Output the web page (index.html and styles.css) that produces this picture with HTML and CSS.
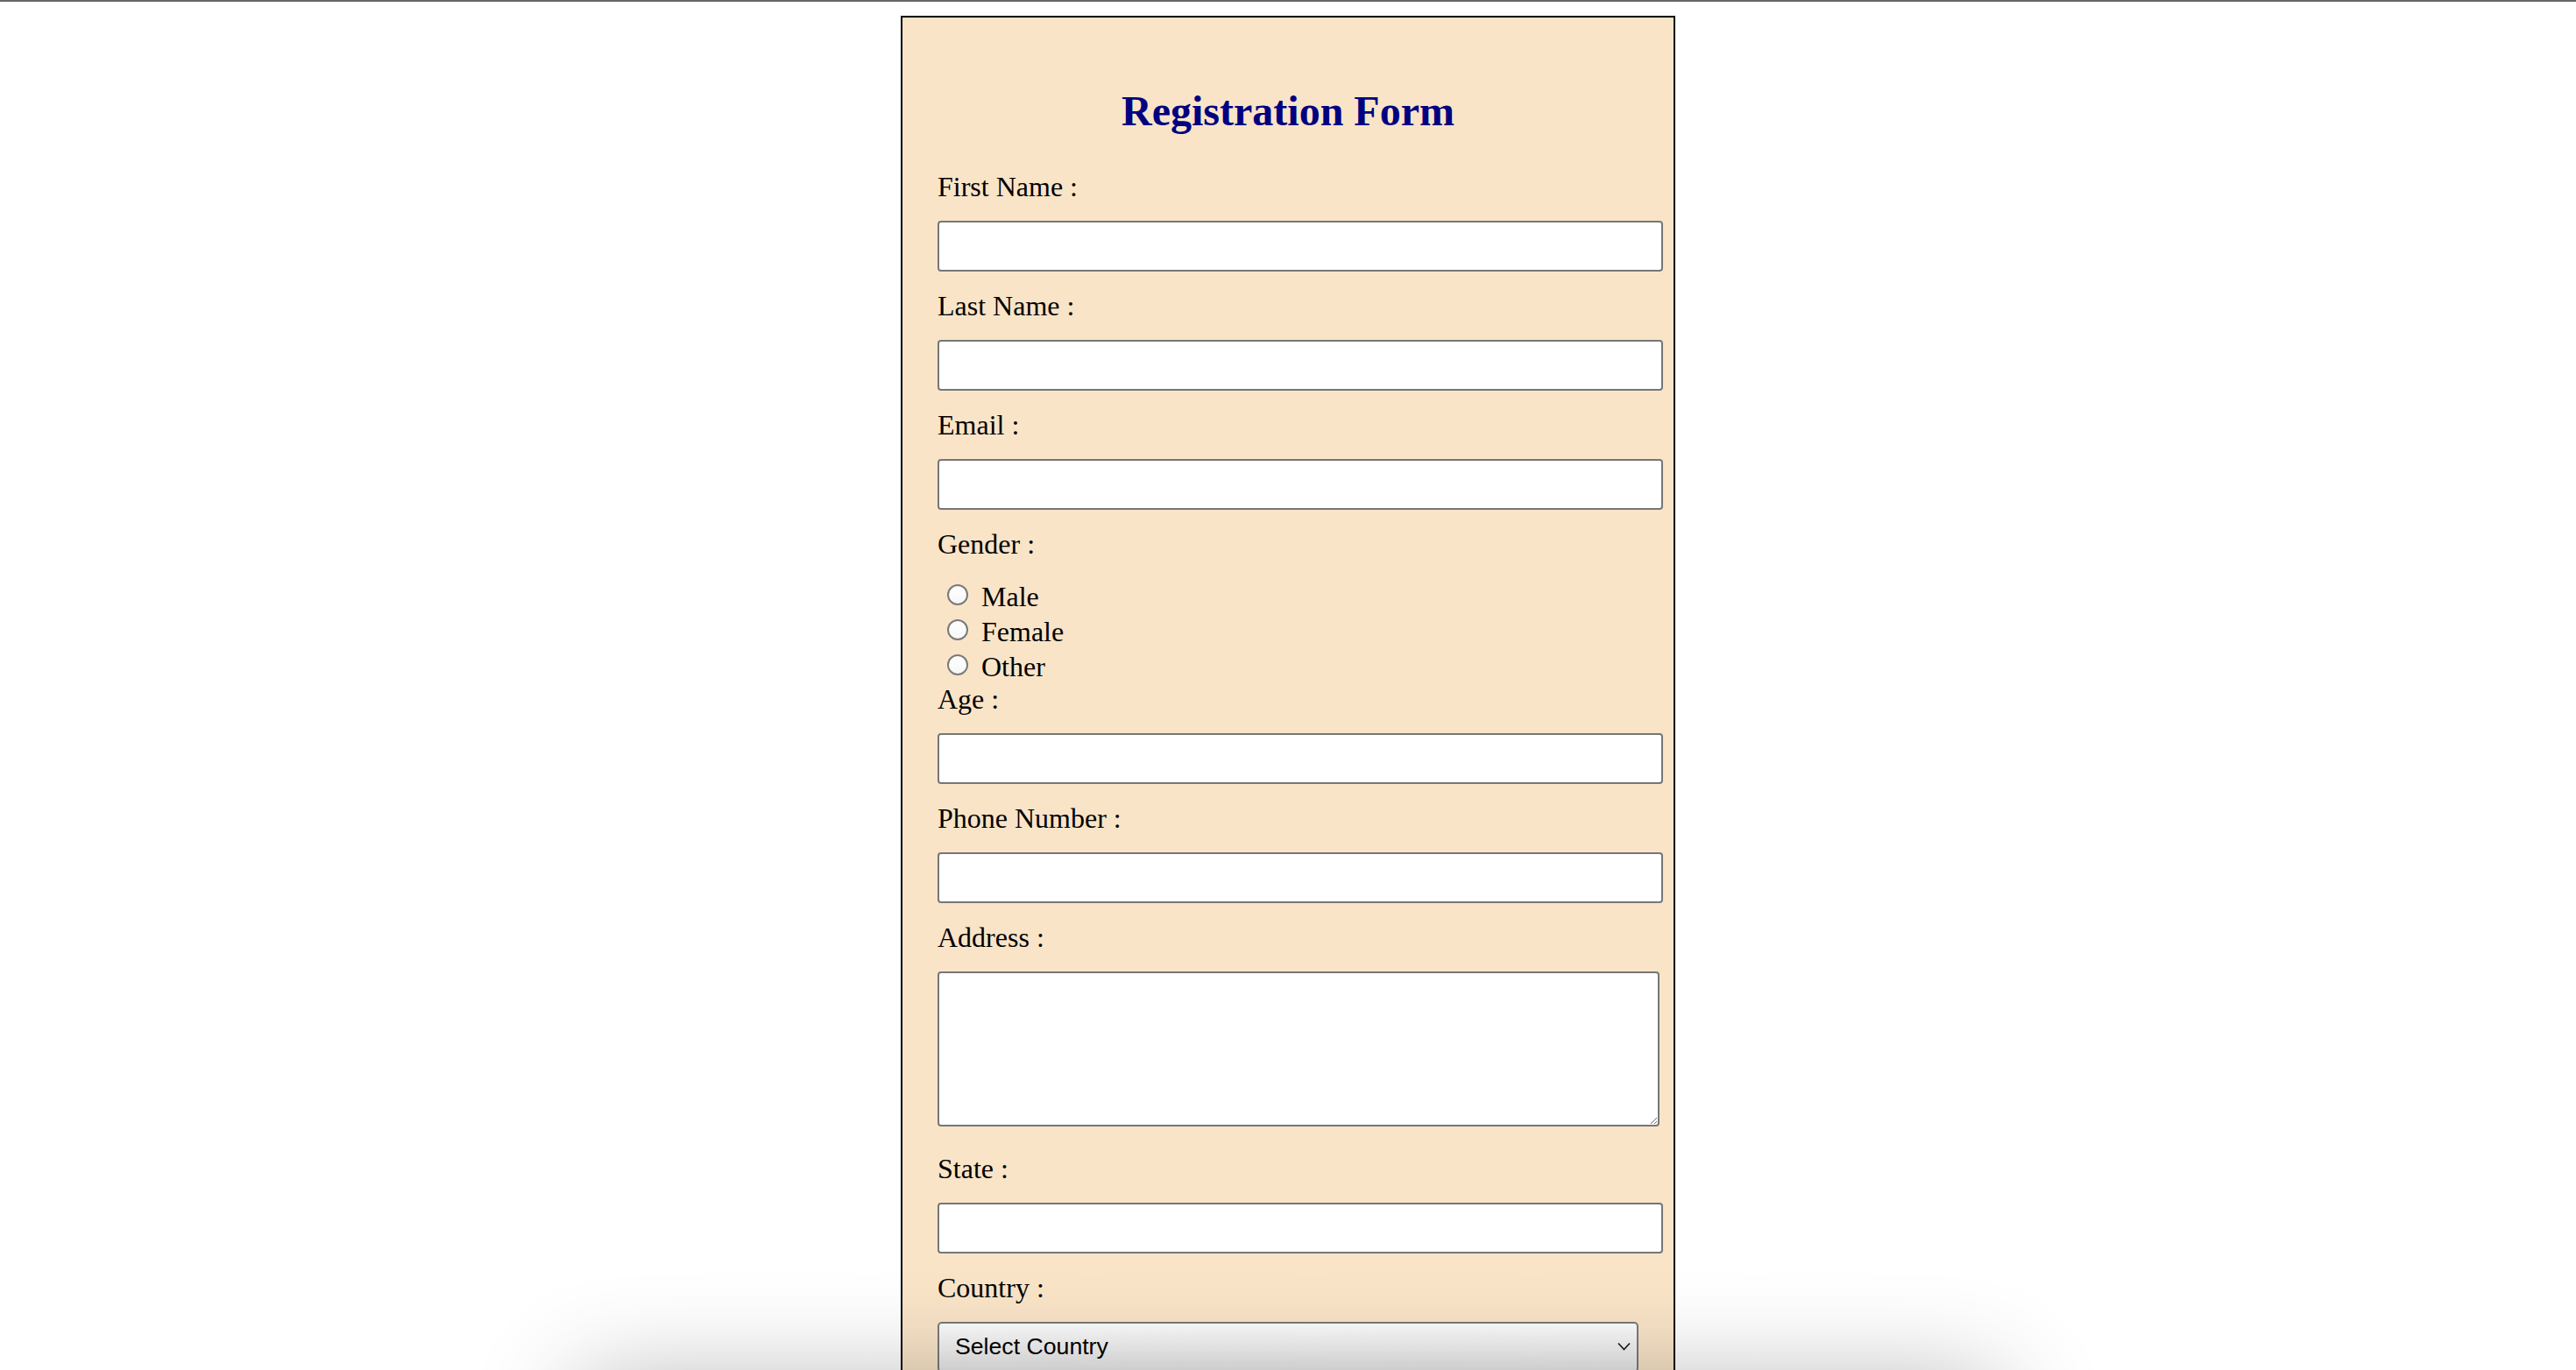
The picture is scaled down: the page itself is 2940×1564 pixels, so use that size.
FILE: index.html
```html
<!DOCTYPE html>
<html lang="en">
<head>
<meta charset="utf-8">
<title>Registration Form</title>
<link rel="stylesheet" href="styles.css">
</head>
<body>
<div class="topline"></div>
<div class="page">
  <form class="card">
    <h2 class="title">Registration Form</h2>

    <label class="lbl" for="fname">First Name :</label>
    <input class="field" type="text" id="fname">

    <label class="lbl" for="lname">Last Name :</label>
    <input class="field" type="text" id="lname">

    <label class="lbl" for="email">Email :</label>
    <input class="field" type="email" id="email">

    <div class="lbl">Gender :</div>
    <div class="radios">
      <label class="opt"><input class="radio" type="radio" name="gender"> Male</label>
      <label class="opt"><input class="radio" type="radio" name="gender"> Female</label>
      <label class="opt"><input class="radio" type="radio" name="gender"> Other</label>
    </div>

    <label class="lbl" for="age">Age :</label>
    <input class="field" type="text" id="age">

    <label class="lbl" for="phone">Phone Number :</label>
    <input class="field" type="text" id="phone">

    <label class="lbl" for="addr">Address :</label>
    <textarea class="area" id="addr"></textarea>

    <label class="lbl" for="state">State :</label>
    <input class="field" type="text" id="state">

    <label class="lbl" for="country">Country :</label>
    <div class="select-wrap">
      <select class="sel" id="country">
        <option>Select Country</option>
        <option>India</option>
        <option>USA</option>
      </select>
      <svg class="chev" width="15" height="10" viewBox="0 0 15 10"><polyline points="1,1.5 7.5,8.5 14,1.5" fill="none" stroke="#1a1a1a" stroke-width="1.6"/></svg>
    </div>
  </form>
</div>
<div class="dock-shadow"></div>
</body>
</html>
```

FILE: styles.css
```css
html {
  height: 100%;
  overflow: hidden;
}

body {
  margin: 0;
  background: #ffffff;
  font-family: "Liberation Serif", "Times New Roman", serif;
  color: #000;
}

.topline {
  height: 2px;
  background: #676767;
}

.page {
  padding-top: 16px;
}

.card {
  width: 800px;
  margin: 0 auto;
  padding: 40px;
  background: #f9e4c8;
  border: 2px solid #000;
}

.title {
  font-size: 48px;
  font-weight: bold;
  color: #000080;
  text-align: center;
  margin: 38.5px 0 41px;
  line-height: normal;
}

.lbl {
  display: block;
  font-size: 32px;
  line-height: 37px;
  margin-bottom: 20px;
}

.field {
  display: block;
  box-sizing: border-box;
  width: 828px;
  height: 58px;
  margin: 0 0 21px;
  padding: 0 12px;
  border: 2px solid #767676;
  border-radius: 4px;
  background: #fff;
  font: 26.67px "Liberation Sans", Arial, sans-serif;
}

.radios {
  display: block;
}

.opt {
  display: block;
  box-sizing: border-box;
  height: 40.2px;
  padding-top: 3px;
  font-size: 32px;
  line-height: 37px;
}

.radio {
  appearance: none;
  -webkit-appearance: none;
  box-sizing: border-box;
  display: inline-block;
  width: 24px;
  height: 24px;
  margin: 0 7px 1px 11px;
  border: 2px solid #7a7a7a;
  border-radius: 50%;
  background: linear-gradient(#ffffff, #f7f7f7);
  vertical-align: baseline;
}

.area {
  display: block;
  box-sizing: border-box;
  width: 824px;
  height: 177px;
  margin: 0 0 29.7px;
  padding: 10px;
  border: 2px solid #767676;
  border-radius: 4px;
  background: #fff;
  font: 26.67px "Liberation Mono", monospace;
}

.select-wrap {
  position: relative;
  width: 800px;
}

.sel {
  appearance: none;
  -webkit-appearance: none;
  display: block;
  box-sizing: border-box;
  width: 800px;
  height: 58px;
  padding: 0 40px 2px 18px;
  border: 2px solid #7a7a7a;
  border-radius: 5px;
  background: linear-gradient(#fcfcfc, #e9e9e9);
  color: #000;
  font: 26.67px "Liberation Sans", Arial, sans-serif;
}

.chev {
  position: absolute;
  right: 9px;
  top: 23px;
  pointer-events: none;
}

.dock-shadow {
  position: fixed;
  left: 680px;
  width: 1580px;
  top: 1600px;
  height: 200px;
  box-shadow: 0 0 120px 20px rgba(0, 0, 0, 0.3);
  pointer-events: none;
}
```
